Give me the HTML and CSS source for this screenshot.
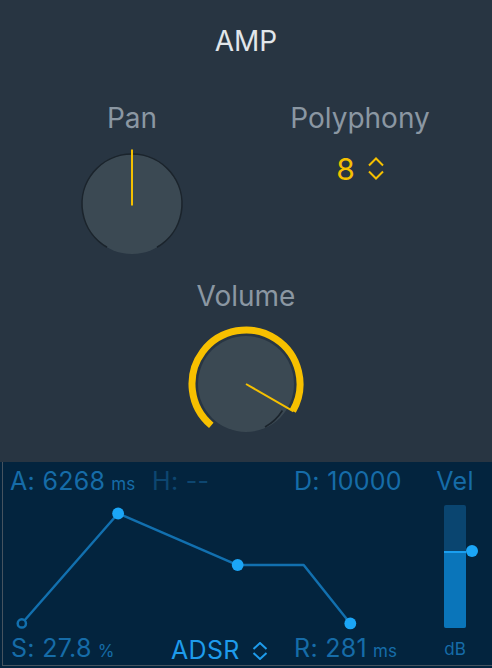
FILE: index.html
```html
<!DOCTYPE html>
<html>
<head>
<meta charset="utf-8">
<link rel="stylesheet" href="styles.css">
</head>
<body>
<section class="amp">
  <h1 class="title">AMP</h1>
  <div class="row">
    <div class="ctrl">
      <div class="label">Pan</div>
      <svg class="knob-pan" width="110" height="110" viewBox="0 0 110 110">
        <circle cx="55" cy="55" r="50" fill="#3b4953"/>
        <path d="M30 98.3 A50 50 0 1 1 80 98.3" fill="none" stroke="#1b242c" stroke-width="1.6"/>
        <line x1="55" y1="0.5" x2="55" y2="56.5" stroke="#f5c000" stroke-width="2"/>
      </svg>
    </div>
    <div class="ctrl">
      <div class="label">Polyphony</div>
      <div class="poly">
        <span class="poly-val">8</span>
        <svg class="chev" width="16" height="24" viewBox="0 0 16 24">
          <polyline points="1,8.5 8,1.5 15,8.5" fill="none" stroke="#f5c000" stroke-width="2"/>
          <polyline points="1,14.5 8,21.5 15,14.5" fill="none" stroke="#f5c000" stroke-width="2"/>
        </svg>
      </div>
    </div>
  </div>
  <div class="ctrl vol">
    <div class="label">Volume</div>
    <svg class="knob-vol" width="120" height="120" viewBox="0 0 120 120">
      <circle cx="60" cy="60" r="48" fill="#3b4953"/>
      <path d="M96.4 86.5 A47 47 0 0 1 79 103" fill="none" stroke="#1b242c" stroke-width="1.6"/>
      <path d="M25.29 101.36 A54 54 0 1 1 106.77 87" fill="none" stroke="#f7c000" stroke-width="7"/>
      <line x1="60" y1="60" x2="107.5" y2="87.4" stroke="#f5c000" stroke-width="2"/>
    </svg>
  </div>
</section>
<section class="env">
  <div class="env-main">
    <div class="env-head">
      <span>A: 6268<small>ms</small></span>
      <span class="dim">H: --</span>
      <span>D: 10000</span>
    </div>
    <svg class="graph" width="422" height="138" viewBox="0 0 422 138">
      <polyline points="16,127.3 113.7,15.7 235,68 302,68 349.3,127.3" fill="none" stroke="#1270af" stroke-width="2.5" stroke-linejoin="round"/>
      <circle cx="16" cy="127.3" r="4.2" fill="#03243e" stroke="#1270af" stroke-width="2.5"/>
      <circle cx="113.7" cy="15.7" r="6" fill="#1ba6f7"/>
      <circle cx="235" cy="68" r="6" fill="#1ba6f7"/>
      <circle cx="349.3" cy="127.3" r="6" fill="#1ba6f7"/>
    </svg>
    <div class="env-foot">
      <span>S: 27.8<small>%</small></span>
      <span class="mode">ADSR<svg class="chev-b" width="16" height="18" viewBox="0 0 16 18">
          <polyline points="1.5,7 8,1 14.5,7" fill="none" stroke="#1e9beb" stroke-width="2"/>
          <polyline points="1.5,11 8,17 14.5,11" fill="none" stroke="#1e9beb" stroke-width="2"/>
        </svg></span>
      <span>R: 281<small>ms</small></span>
    </div>
  </div>
  <div class="vel">
    <div class="vel-label">Vel</div>
    <div class="slider">
      <div class="fill" style="height:77px"></div>
      <div class="handle"></div>
    </div>
    <div class="db">dB</div>
  </div>
</section>
</body>
</html>
```

FILE: styles.css
```css
* { box-sizing: border-box; }
html, body {
  margin: 0;
  padding: 0;
}
body {
  width: 492px;
  height: 668px;
  overflow: hidden;
  background: #03243e;
  font-family: Inter, "Noto Sans", sans-serif;
}
.amp {
  height: 462px;
  background: #283542;
  display: flex;
  flex-direction: column;
  align-items: center;
}
.title {
  margin: 24px 0 0;
  font-size: 28px;
  line-height: 34px;
  font-weight: 400;
  color: #e2e6ea;
}
.row {
  display: flex;
  gap: 28px;
  margin-top: 43px;
}
.ctrl {
  width: 200px;
  display: flex;
  flex-direction: column;
  align-items: center;
}
.label {
  font-size: 28px;
  line-height: 34px;
  color: #8b97a2;
}
.knob-pan {
  display: block;
  margin-top: 14px;
}
.poly {
  margin-top: 16px;
  display: flex;
  align-items: center;
  gap: 13px;
  color: #f5c000;
  font-size: 30px;
  line-height: 36px;
}
.chev { display: block; }
.vol { margin-top: 20px; }
.knob-vol {
  display: block;
  margin-top: 11px;
}
.env {
  display: flex;
  height: 204px;
  margin-left: 2px;
  border-left: 1px solid #46535f;
  border-bottom: 1px solid #46535f;
  background: #03243e;
  color: #166ca8;
  font-size: 25px;
  line-height: 28px;
  letter-spacing: 0.3px;
}
.env-main {
  width: 422px;
  display: flex;
  flex-direction: column;
}
.env-head {
  display: grid;
  grid-template-columns: 142px 142px auto;
  padding: 5px 0 0 7px;
}
.dim { color: #0d4670; }
small {
  font-size: 17px;
  margin-left: 6px;
  letter-spacing: 0;
}
.graph { display: block; }
.env-foot {
  display: grid;
  grid-template-columns: 160px 123px auto;
  padding-left: 8px;
}
.mode {
  color: #1e9beb;
  display: flex;
  align-items: center;
  gap: 12px;
}
.chev-b { display: block; margin-top: 2px; }
.vel {
  width: 60px;
  display: flex;
  flex-direction: column;
  align-items: center;
  padding-top: 5px;
}
.slider {
  position: relative;
  width: 22px;
  height: 123px;
  margin-top: 10px;
  background: #0a4570;
  border-radius: 2px;
  display: flex;
  flex-direction: column;
  justify-content: flex-end;
}
.fill {
  background: #0a75ba;
  border-top: 2px solid #1a9ff0;
  border-radius: 0 0 2px 2px;
}
.handle {
  position: absolute;
  left: 22px;
  top: 40px;
  width: 12px;
  height: 12px;
  border-radius: 50%;
  background: #1ba6f7;
}
.db {
  margin-top: 11px;
  font-size: 17px;
  line-height: 20px;
  letter-spacing: 0;
}
```
